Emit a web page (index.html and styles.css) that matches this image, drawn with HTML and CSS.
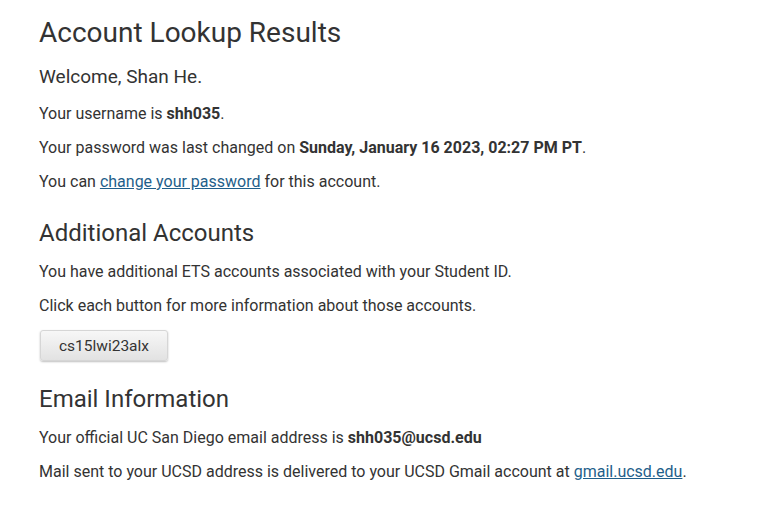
FILE: index.html
```html
<!DOCTYPE html>
<html lang="en">
<head>
<meta charset="utf-8">
<title>Account Lookup Results</title>
<link rel="stylesheet" href="styles.css">
</head>
<body>
<main class="content">
  <h1 class="title">Account Lookup Results</h1>
  <h2 class="welcome">Welcome, Shan He.</h2>
  <p class="line">Your username is <strong>shh035</strong>.</p>
  <p class="line">Your password was last changed on <strong>Sunday, January 16 2023, 02:27 PM PT</strong>.</p>
  <p class="line">You can <a href="#" class="link">change your password</a> for this account.</p>

  <h2 class="section">Additional Accounts</h2>
  <p class="line">You have additional ETS accounts associated with your Student ID.</p>
  <p class="line">Click each button for more information about those accounts.</p>
  <div class="buttons"><button class="acct-btn" type="button">cs15lwi23alx</button></div>

  <h2 class="section">Email Information</h2>
  <p class="line">Your official UC San Diego email address is <strong>shh035@ucsd.edu</strong></p>
  <p class="line">Mail sent to your UCSD address is delivered to your UCSD Gmail account at <a href="#" class="link">gmail.ucsd.edu</a>.</p>
</main>
</body>
</html>
```

FILE: styles.css
```css
html, body {
  margin: 0;
  padding: 0;
  background: #ffffff;
}
body {
  font-family: Roboto, "Liberation Sans", sans-serif;
  color: #333333;
  font-size: 16px;
  line-height: 20px;
}
.content {
  padding: 15px 40px 20px 39px;
}
.title {
  font-size: 28px;
  font-weight: 400;
  line-height: 36px;
  margin: 0 0 14px 0;
}
.welcome {
  font-size: 19px;
  font-weight: 400;
  line-height: 24px;
  margin: 0 0 15px 0;
}
.line {
  margin: 0 0 14px 0;
}
.line strong {
  font-weight: 700;
}
.link {
  color: #1f5f8b;
  text-decoration: underline;
}
.section {
  font-size: 24px;
  font-weight: 400;
  line-height: 32px;
  margin: 25px 0 13px 0;
}
.buttons + .section {
  margin-top: 0;
}
.buttons {
  display: flex;
  margin: 0 0 22px 1px;
}
.acct-btn {
  font-family: Roboto, "Liberation Sans", sans-serif;
  font-size: 15.5px;
  color: #333333;
  width: 128px;
  height: 31px;
  border: 1px solid #d6d6d6;
  border-radius: 3px;
  background: linear-gradient(#f7f7f7, #e2e2e2);
  box-shadow: 0 1px 2px rgba(0,0,0,0.25);
  padding: 0 12px;
}
```
